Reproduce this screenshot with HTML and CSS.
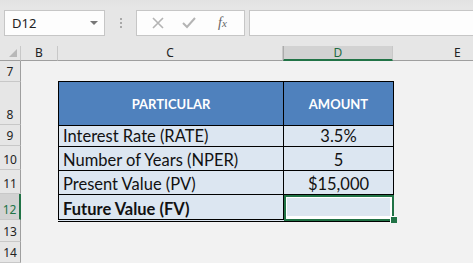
FILE: index.html
```html
<!DOCTYPE html>
<html>
<head>
	<meta charset="UTF-8">
	<title>FV</title>
	<link rel="stylesheet" href="styles.css">
</head>
<body>
	<div class="toolbar">
		<div class="namebox">
			<span>D12</span>
			<span class="arrow"></span>
		</div>
		<div class="grip"><i></i><i></i><i></i></div>
		<div class="fxbox">
			<svg class="btn" width="14" height="14" viewBox="0 0 14 14"><path d="M2 2 L12 12 M12 2 L2 12" stroke="#b4b4b4" stroke-width="1.6" fill="none"/></svg>
			<svg class="btn" width="16" height="14" viewBox="0 0 16 14"><path d="M2 7 L6 11 L14 2" stroke="#b4b4b4" stroke-width="2" fill="none"/></svg>
			<span class="fx">f<small>x</small></span>
		</div>
		<div class="formula"></div>
	</div>

	<div class="sheet">
		<div class="corner"><span></span></div>
		<div class="colhead">B</div>
		<div class="colhead">C</div>
		<div class="colhead active">D</div>
		<div class="colhead last">E</div>

		<div class="rowhead r7">7</div>
		<div class="rowhead r8">8</div>
		<div class="rowhead r9">9</div>
		<div class="rowhead r10">10</div>
		<div class="rowhead r11">11</div>
		<div class="rowhead r12 active">12</div>
		<div class="rowhead r13">13</div>
		<div class="rowhead r14">14</div>

		<table class="data">
			<tr class="head">
				<th class="c-col">PARTICULAR</th>
				<th>AMOUNT</th>
			</tr>
			<tr class="r-9">
				<td>Interest Rate (RATE)</td>
				<td class="num">3.5%</td>
			</tr>
			<tr class="r-10">
				<td>Number of Years (NPER)</td>
				<td class="num">5</td>
			</tr>
			<tr class="r-11">
				<td>Present Value (PV)</td>
				<td class="num">$15,000</td>
			</tr>
			<tr class="r-12">
				<td class="bold">Future Value (FV)</td>
				<td class="num sel"></td>
			</tr>
		</table>
	</div>
</body>
</html>
```

FILE: styles.css
```css
*{
	margin: 0;
	padding: 0;
	box-sizing: border-box;
}
body{
	width: 473px;
	height: 263px;
	overflow: hidden;
	background: #f2f2f2;
	font-family: "Noto Sans", "DejaVu Sans", sans-serif;
}

/* formula bar */
.toolbar{
	height: 46px;
	display: flex;
	align-items: flex-start;
	padding-top: 10px;
	background: linear-gradient(#e2e2e2, #e6e6e6 8px);
}
.namebox{
	margin-left: 4px;
	width: 101px;
	height: 26px;
	background: #fdfdfd;
	border: 1px solid #c6c6c6;
	display: flex;
	align-items: center;
	justify-content: space-between;
	padding: 0 6px 0 7px;
	font-size: 13px;
	color: #222;
}
.arrow{
	width: 0;
	height: 0;
	border-left: 4px solid transparent;
	border-right: 4px solid transparent;
	border-top: 4px solid #777;
}
.grip{
	width: 31px;
	height: 26px;
	display: flex;
	flex-direction: column;
	align-items: center;
	justify-content: center;
	gap: 2px;
}
.grip i{
	display: block;
	width: 2px;
	height: 2px;
	background: #a8a8a8;
}
.fxbox{
	width: 109px;
	height: 26px;
	background: #fdfdfd;
	border: 1px solid #c6c6c6;
	display: flex;
	align-items: center;
	padding-left: 14px;
	gap: 16px;
}
.fx{
	font: italic 14px "Liberation Serif", serif;
	color: #666;
	margin-left: 5px;
}
.fx small{
	font-size: 11px;
}
.formula{
	margin-left: 4px;
	flex: 1;
	height: 26px;
	background: #fdfdfd;
	border: 1px solid #c6c6c6;
	border-right: none;
}

/* grid */
.sheet{
	display: grid;
	grid-template-columns: 21px 37px 225px 110px 80px;
	grid-template-rows: 15px 21px 43px 21px 24px 24px 26px 22px 21px;
}
.corner{
	background: #e6e6e6;
	border-right: 1px solid #c8c8c8;
	border-bottom: 1px solid #9f9f9f;
	position: relative;
}
.corner span{
	position: absolute;
	right: 3px;
	bottom: 3px;
	width: 0;
	height: 0;
	border-left: 8px solid transparent;
	border-bottom: 8px solid #b8b8b8;
}
.colhead{
	background: #e6e6e6;
	border-right: 1px solid #c8c8c8;
	border-bottom: 1px solid #9f9f9f;
	font-size: 12px;
	line-height: 14px;
	text-align: center;
	color: #222;
}
.colhead.last{
	border-right: none;
	text-align: left;
	padding-left: 61px;
}
.colhead.active{
	background: #d2d2d2;
	color: #1e6b40;
	border-left: 1px solid #ababab;
	border-bottom: 2px solid #217346;
}
.rowhead{
	grid-column: 1;
	background: #e6e6e6;
	border-right: 1px solid #9f9f9f;
	border-bottom: 1px solid #c8c8c8;
	font-size: 12px;
	color: #222;
	display: flex;
	align-items: flex-end;
	justify-content: center;
	padding-bottom: 1px;
}
.rowhead.active{
	background: #d2d2d2;
	color: #217346;
	border-right: 2px solid #217346;
}
.r7{ grid-row: 2; }
.r8{ grid-row: 3; }
.r9{ grid-row: 4; }
.r10{ grid-row: 5; }
.r11{ grid-row: 6; }
.r12{ grid-row: 7; }
.r13{ grid-row: 8; }
.r14{ grid-row: 9; }

/* table */
.data{
	grid-column: 3 / 5;
	grid-row: 3 / 8;
	align-self: start;
	border-collapse: collapse;
	table-layout: fixed;
	width: 336px;
	font-family: Lato, "Open Sans", sans-serif;
	font-size: 16.5px;
	color: #111;
	margin-top: -1px;
}
.data th, .data td{
	border: 1px solid #000;
	padding: 0 4px;
	white-space: nowrap;
	overflow: visible;
}
.data th{
	background: #4f81bd;
	color: #fff;
	font-size: 13px;
	font-weight: bold;
	text-align: center;
	height: 44px;
}
.data th.c-col{
	width: 225px;
}
.data td{
	background: #dce6f1;
	vertical-align: bottom;
	line-height: 19px;
}
.r-9 td{ height: 21px; }
.r-10 td{ height: 24px; }
.r-11 td{ height: 24px; }
.r-12 td{ height: 26px; border-bottom: 3px double #000; }
.data td.num{
	text-align: center;
}
.data td.bold{
	font-weight: bold;
}
.data td.sel{
	position: relative;
	outline: 2px solid #217346;
	outline-offset: -2px;
	box-shadow: inset 0 0 0 3px #fff;
}
.data td.sel::after{
	content: "";
	position: absolute;
	right: -4px;
	bottom: -4px;
	width: 6px;
	height: 6px;
	background: #217346;
	border-left: 1px solid #fff;
	border-top: 1px solid #fff;
}
```
